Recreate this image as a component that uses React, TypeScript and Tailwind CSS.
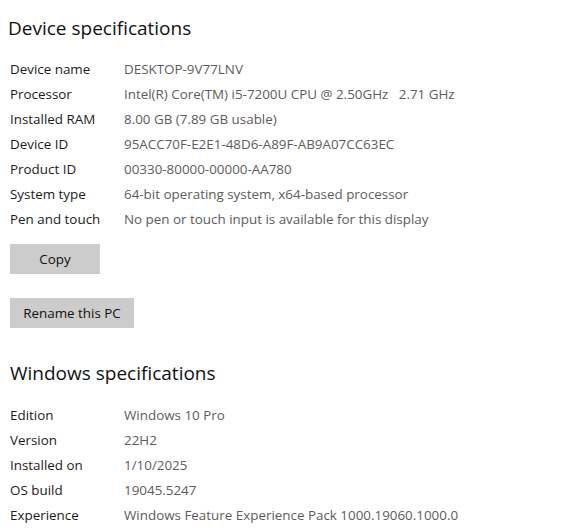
import React from "react";

const device: [string, string][] = [
  ["Device name", "DESKTOP-9V77LNV"],
  ["Processor", "Intel(R) Core(TM) i5-7200U CPU @ 2.50GHz   2.71 GHz"],
  ["Installed RAM", "8.00 GB (7.89 GB usable)"],
  ["Device ID", "95ACC70F-E2E1-48D6-A89F-AB9A07CC63EC"],
  ["Product ID", "00330-80000-00000-AA780"],
  ["System type", "64-bit operating system, x64-based processor"],
  ["Pen and touch", "No pen or touch input is available for this display"],
];

const windows: [string, string][] = [
  ["Edition", "Windows 10 Pro"],
  ["Version", "22H2"],
  ["Installed on", "1/10/2025"],
  ["OS build", "19045.5247"],
  ["Experience", "Windows Feature Experience Pack 1000.19060.1000.0"],
];

function Rows({ rows }: { rows: [string, string][] }) {
  return (
    <div className="flex flex-col">
      {rows.map(([k, v]) => (
        <div key={k} className="flex h-[25px] items-center">
          <div className="w-[114px] shrink-0 text-[#1b1b1b]">{k}</div>
          <div className="whitespace-pre text-[#5c5c5c]">{v}</div>
        </div>
      ))}
    </div>
  );
}

export default function App() {
  return (
    <div
      className="w-[575px] h-[532px] bg-white overflow-hidden text-[13.4px]"
      style={{ fontFamily: '"Open Sans", "Noto Sans", sans-serif' }}
    >
      <div className="pl-[10px]">
        <h1 className="text-[19px] text-[#111] ml-[-2px] pt-[14px] leading-[28px]">Device specifications</h1>
        <div className="mt-[15px]">
          <Rows rows={device} />
        </div>
        <button className="mt-[12px] block w-[90px] h-[30px] bg-[#cccccc] text-[#111]">Copy</button>
        <button className="mt-[24px] block w-[124px] h-[30px] bg-[#cccccc] text-[#111]">Rename this PC</button>
        <h2 className="text-[19px] text-[#111] mt-[31px] leading-[28px]">Windows specifications</h2>
        <div className="mt-[16px]">
          <Rows rows={windows} />
        </div>
      </div>
    </div>
  );
}
